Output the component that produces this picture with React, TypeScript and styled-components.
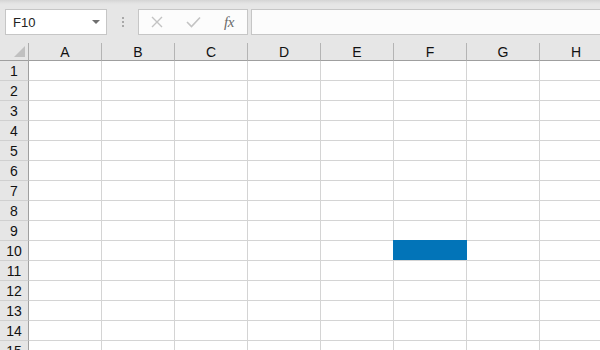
import styled, { createGlobalStyle } from "styled-components";

const GlobalStyle = createGlobalStyle`
    html, body {
        margin: 0;
        padding: 0;
        overflow: hidden;
        background: #ffffff;
        font-family: "Liberation Sans", Arial, sans-serif;
    }
`;

const columns = ["A", "B", "C", "D", "E", "F", "G", "H"];
const rowCount = 15;
const selected = { col: "F", row: 10 };

export default function App() {
    return (
        <>
            <GlobalStyle />
            <Window>
                <Toolbar>
                    <NameBox>
                        <NameText>F10</NameText>
                        <Caret />
                    </NameBox>
                    <Grip>
                        <Dot />
                        <Dot />
                        <Dot />
                    </Grip>
                    <FormulaButtons>
                        <IconButton>
                            <svg width="12" height="12" viewBox="0 0 12 12">
                                <path d="M1 1 L11 11 M11 1 L1 11" stroke="#c3c3c3" strokeWidth="1.4" fill="none" />
                            </svg>
                        </IconButton>
                        <IconButton>
                            <svg width="15" height="12" viewBox="0 0 15 12">
                                <path d="M1 6 L5.5 10.5 L14 1.5" stroke="#c3c3c3" strokeWidth="1.6" fill="none" />
                            </svg>
                        </IconButton>
                        <FxLabel>fx</FxLabel>
                    </FormulaButtons>
                    <FormulaInput />
                </Toolbar>
                <Sheet>
                    <Corner>
                        <CornerTriangle />
                    </Corner>
                    {columns.map((c) => (
                        <ColumnHeader key={c}>{c}</ColumnHeader>
                    ))}
                    {Array.from({ length: rowCount }, (_, i) => i + 1).map((r) => (
                        <Row key={r}>
                            <RowHeader>{r}</RowHeader>
                            {columns.map((c) => (
                                <Cell key={c} $selected={c === selected.col && r === selected.row} />
                            ))}
                        </Row>
                    ))}
                </Sheet>
            </Window>
        </>
    );
}

const Window = styled.div`
    width: 600px;
    height: 350px;
    overflow: hidden;
    background: #e6e6e6;
`;

const Toolbar = styled.div`
    height: 43px;
    box-sizing: border-box;
    padding: 9px 0 0 5px;
    display: flex;
    align-items: flex-start;
    background: linear-gradient(#d4d4d4 0px, #e2e2e2 3px, #e6e6e6 5px);
`;

const NameBox = styled.div`
    width: 102px;
    height: 26px;
    box-sizing: border-box;
    border: 1px solid #c6c6c6;
    background: #ffffff;
    display: flex;
    align-items: center;
    justify-content: space-between;
    padding: 0 6px 0 7px;
`;

const NameText = styled.span`
    font-size: 13px;
    color: #222222;
`;

const Caret = styled.span`
    width: 0;
    height: 0;
    border-left: 4px solid transparent;
    border-right: 4px solid transparent;
    border-top: 4px solid #6f6f6f;
`;

const Grip = styled.div`
    width: 31px;
    height: 26px;
    display: flex;
    flex-direction: column;
    align-items: center;
    justify-content: center;
    gap: 2px;
`;

const Dot = styled.span`
    width: 2px;
    height: 2px;
    background: #a8a8a8;
`;

const FormulaButtons = styled.div`
    width: 110px;
    height: 26px;
    box-sizing: border-box;
    border: 1px solid #c6c6c6;
    background: #fcfcfc;
    display: flex;
    align-items: center;
    padding: 0 0 0 12px;
`;

const IconButton = styled.span`
    width: 35px;
    display: flex;
    align-items: center;
    justify-content: flex-start;
`;

const FxLabel = styled.span`
    font-family: "Liberation Serif", "Times New Roman", serif;
    font-style: italic;
    font-size: 15px;
    color: #6a6a6a;
    margin-left: 3px;
    letter-spacing: -0.5px;
`;

const FormulaInput = styled.div`
    flex: 1;
    height: 26px;
    box-sizing: border-box;
    margin-left: 3px;
    border: 1px solid #c6c6c6;
    border-right: none;
    background: #fcfcfc;
`;

const Sheet = styled.div`
    display: grid;
    grid-template-columns: 29px repeat(8, 73px);
    grid-auto-rows: 20px;
    grid-template-rows: 18px;
    background: #ffffff;
`;

const Row = styled.div`
    display: contents;
`;

const HeaderBase = styled.div`
    box-sizing: border-box;
    background: #e6e6e6;
    color: #111111;
    font-size: 14px;
    display: flex;
    align-items: center;
    justify-content: center;
`;

const Corner = styled(HeaderBase)`
    position: relative;
    border-right: 1px solid #ababab;
    border-bottom: 1px solid #9f9f9f;
`;

const CornerTriangle = styled.span`
    position: absolute;
    right: 3px;
    bottom: 3px;
    width: 0;
    height: 0;
    border-left: 11px solid transparent;
    border-bottom: 11px solid #c0c0c0;
`;

const ColumnHeader = styled(HeaderBase)`
    border-right: 1px solid #b4b4b4;
    border-bottom: 1px solid #9f9f9f;
    padding-top: 1px;
`;

const RowHeader = styled(HeaderBase)`
    border-right: 1px solid #9f9f9f;
    border-bottom: 1px solid #d0d0d0;
`;

const Cell = styled.div<{ $selected?: boolean }>`
    position: relative;
    box-sizing: border-box;
    border-right: 1px solid #d4d4d4;
    border-bottom: 1px solid #d4d4d4;
    &::after {
        content: "";
        display: ${(p) => (p.$selected ? "block" : "none")};
        position: absolute;
        top: -1px;
        left: -1px;
        right: -1px;
        bottom: 0;
        background: #0274b8;
    }
`;
